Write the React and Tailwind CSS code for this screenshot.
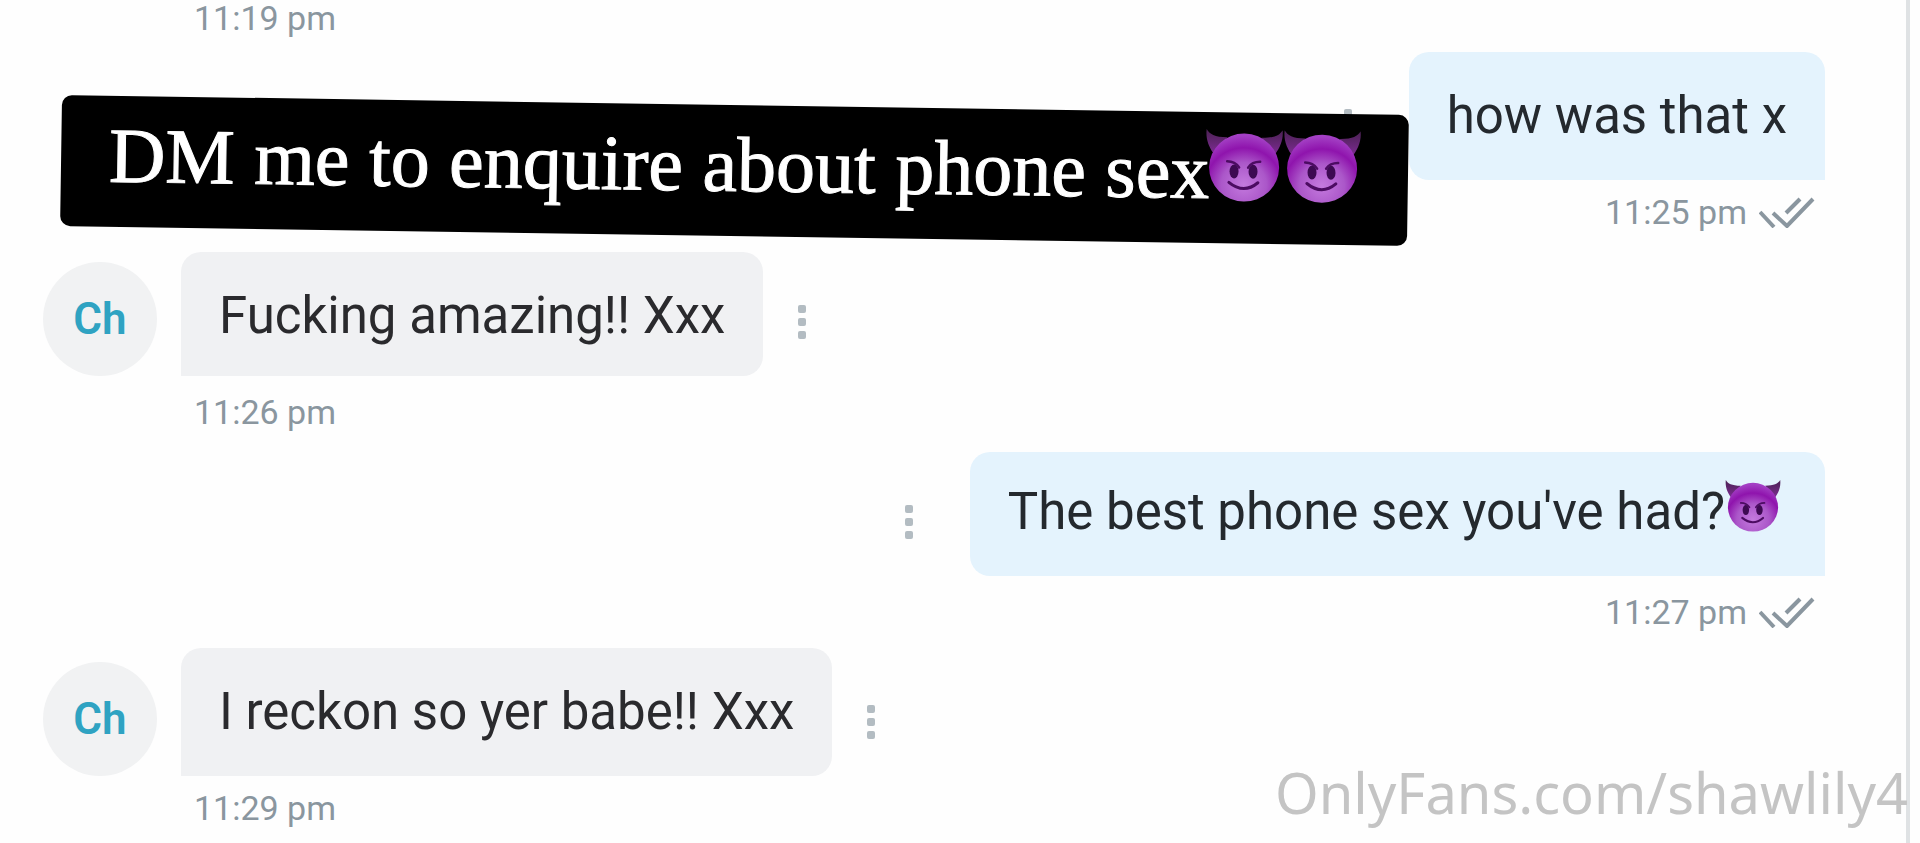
import React from 'react';
import { clsx } from 'clsx';

const messages = [
  { id: 1, mine: true, text: 'how was that x', time: '11:25 pm', tall: true },
  { id: 2, mine: false, text: 'Fucking amazing!! Xxx', time: '11:26 pm' },
  { id: 3, mine: true, text: "The best phone sex you've had?", devil: true, time: '11:27 pm' },
  { id: 4, mine: false, text: 'I reckon so yer babe!! Xxx', time: '11:29 pm', tall: true },
];

function DevilIcon({ id, className }) {
  return (
    <svg viewBox="0 0 78 74" role="img" aria-label="😈" className={className}>
      <defs>
        <radialGradient id={`${id}-face`} cx="0.5" cy="0.75" r="0.72">
          <stop offset="0" stopColor="#c47ade" />
          <stop offset="0.45" stopColor="#ab57c9" />
          <stop offset="0.75" stopColor="#8f14ad" />
          <stop offset="1" stopColor="#a33fc4" />
        </radialGradient>
        <linearGradient id={`${id}-horn`} x1="0" y1="0" x2="0" y2="1">
          <stop offset="0" stopColor="#4a2152" />
          <stop offset="1" stopColor="#7c2b92" />
        </linearGradient>
      </defs>
      <path d="M1 0C4 5 9 8 22 8L8 24C3 17 0 9 1 0Z" fill={`url(#${id}-horn)`} />
      <path d="M77 0C74 5 69 8 56 8L70 24C75 17 78 9 77 0Z" fill={`url(#${id}-horn)`} />
      <ellipse cx="39" cy="38" rx="35" ry="34" fill={`url(#${id}-face)`} />
      <ellipse cx="29" cy="42" rx="4.5" ry="7" fill="#3d0a52" />
      <ellipse cx="48" cy="42" rx="4.5" ry="7" fill="#3d0a52" />
      <path d="M22 32Q30 32 34 38M55 32Q47 32 43 38" fill="none" stroke="#4c0c62" strokeWidth="2.5" strokeLinecap="round" />
      <path d="M24 53Q39 65 53 53" fill="none" stroke="#4c0c62" strokeWidth="3" strokeLinecap="round" />
    </svg>
  );
}

function ReadTicks() {
  return (
    <svg viewBox="0 0 56 32" aria-label="Read" className="h-8 w-14" fill="none" stroke="#8a969f" strokeWidth="4">
      <path d="M1 16L15 31" />
      <path d="M14 17L28 30L54 3" />
      <path d="M27 17L41 3" />
    </svg>
  );
}

function MenuButton() {
  return (
    <button type="button" aria-label="Message options" className="mb-[37px] flex flex-col gap-[5px]">
      <span className="size-2 rounded-[2px] bg-[#b3bcc2]" />
      <span className="size-2 rounded-[2px] bg-[#b3bcc2]" />
      <span className="size-2 rounded-[2px] bg-[#b3bcc2]" />
    </button>
  );
}

function Message({ id, mine, text, devil, time, tall }) {
  return (
    <article className="h-[200px] nth-3:h-[196px]">
      <div className={clsx('flex items-end', mine && 'flex-row-reverse')}>
        {!mine && (
          <div className="mr-6 flex size-[114px] shrink-0 items-center justify-center rounded-full bg-[#f1f2f3] text-[44px] font-semibold text-[#2fa3c2]">
            Ch
          </div>
        )}
        <div
          className={clsx(
            'flex items-start rounded-[20px] text-[51px] leading-[64px]',
            tall ? 'h-32' : 'h-[124px]',
            devil ? 'pt-7 pr-11 pl-[38px]' : 'px-[38px] pt-8',
            mine ? 'ml-[57px] rounded-br-none bg-[#e4f3fd] text-[#24292e]' : 'mr-[35px] rounded-bl-none bg-[#f0f1f3] text-[#2a2a2d]',
          )}
        >
          <p className="whitespace-nowrap">{text}</p>
          {devil && <DevilIcon id={`devil-${id}`} className="h-[53px] w-14" />}
        </div>
        <MenuButton />
      </div>
      <div
        className={clsx(
          'flex items-center gap-3 text-[34px] leading-9 text-[#8a969f]',
          tall ? 'mt-[14px]' : 'mt-[18px]',
          mine ? 'justify-end pr-[10px]' : 'pl-[151px]',
        )}
      >
        <time>{time}</time>
        {mine && <ReadTicks />}
      </div>
    </article>
  );
}

export default function App() {
  return (
    <div className="relative min-h-screen overflow-hidden bg-[#fefefe] pr-[10px] font-[Roboto,sans-serif]">
      <main className="min-h-screen border-r-4 border-[#dfe2e4] pr-[81px] pl-[43px]">
        <div className="h-[52px] pl-[151px] text-[34px] leading-9 text-[#8a969f]">
          <time>11:19 pm</time>
        </div>
        <section>
          {messages.map((m) => (
            <Message key={m.id} {...m} />
          ))}
        </section>
      </main>

      {/* promo sticker, lies over the chat */}
      <div className="absolute top-[105px] left-[61px] flex h-[131px] w-[1347px] rotate-[0.85deg] items-center rounded-[10px] bg-black pb-3 pl-12">
        <p className="-mr-1 font-['Liberation_Serif',serif] text-[78px] leading-[96px] whitespace-nowrap text-white [-webkit-text-stroke:1px_white]">
          DM me to enquire about phone sex
        </p>
        <DevilIcon id="sticker-a" className="mb-3 h-[74px] w-[78px]" />
        <DevilIcon id="sticker-b" className="mb-3 h-[74px] w-[78px]" />
      </div>

      <p className="absolute right-3 bottom-5 font-['Noto_Sans',sans-serif] text-[56px] leading-[72px] text-[#c4c4c4]">
        OnlyFans.com/shawlily4
      </p>
    </div>
  );
}
